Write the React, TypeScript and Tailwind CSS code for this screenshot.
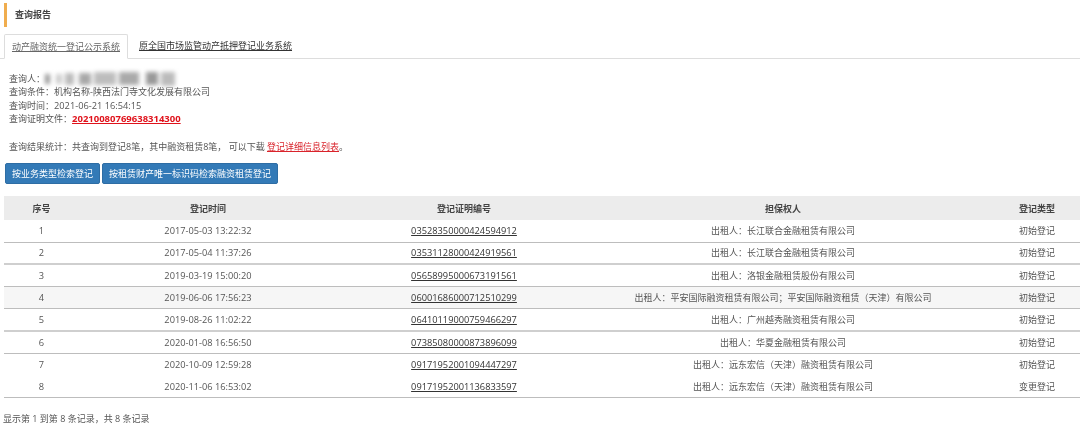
const rows = [
  { time: "2017-05-03 13:22:32", no: "03528350000424594912", owner: "出租人：长江联合金融租赁有限公司", type: "初始登记", line: "border-b border-[#bdbdbd]" },
  { time: "2017-05-04 11:37:26", no: "03531128000424919561", owner: "出租人：长江联合金融租赁有限公司", type: "初始登记", line: "border-b-2 border-[#cfcfcf]" },
  { time: "2019-03-19 15:00:20", no: "05658995000673191561", owner: "出租人：洛银金融租赁股份有限公司", type: "初始登记", line: "border-b border-[#bdbdbd]" },
  { time: "2019-06-06 17:56:23", no: "06001686000712510299", owner: "出租人：平安国际融资租赁有限公司；平安国际融资租赁（天津）有限公司", type: "初始登记", line: "border-b border-[#bdbdbd] bg-[#f6f6f6]" },
  { time: "2019-08-26 11:02:22", no: "06410119000759466297", owner: "出租人：广州越秀融资租赁有限公司", type: "初始登记", line: "border-b-2 border-[#cfcfcf]" },
  { time: "2020-01-08 16:56:50", no: "07385080000873896099", owner: "出租人：华夏金融租赁有限公司", type: "初始登记", line: "border-b border-[#bdbdbd]" },
  { time: "2020-10-09 12:59:28", no: "09171952001094447297", owner: "出租人：远东宏信（天津）融资租赁有限公司", type: "初始登记", line: "" },
  { time: "2020-11-06 16:53:02", no: "09171952001136833597", owner: "出租人：远东宏信（天津）融资租赁有限公司", type: "变更登记", line: "border-b border-[#bdbdbd]" },
];

const grid = "grid grid-cols-[75px_258px_254px_384px_105px] items-center text-center";

export default function App() {
  return (
    <div className="h-[433px] w-[1080px] overflow-hidden bg-white font-['Open_Sans','Noto_Sans_CJK_SC',sans-serif] text-[9px] leading-[13.3px] text-[#555] [filter:blur(0.4px)]">
      <div className="flex pl-[4px] pt-[3px]">
        <div className="flex h-[24px] items-center border-l-[3px] border-[#f0ad4e] pl-[8px] font-semibold text-[#444]">查询报告</div>
      </div>

      <div className="mt-[7px] flex h-[25px] border-b border-[#ddd] pl-[4px]">
        <div className="flex h-[25px] w-[124px] items-center justify-center rounded-t-[2px] border border-[#ddd] border-b-white bg-white text-[#666] underline">动产融资统一登记公示系统</div>
        <div className="flex h-[24px] items-center pl-[11px] text-[#333] underline">原全国市场监管动产抵押登记业务系统</div>
      </div>

      <div className="pl-[9px] pt-[13px]">
        <div className="flex h-[13.3px] items-center">
          查询人：
          <div className="flex items-center gap-[3px] blur-[2px]">
            <div className="h-[10px] w-[5px] bg-[#999]" />
            <div className="ml-[3px] h-[10px] w-[6px] bg-[#ccc]" />
            <div className="h-[12px] w-[9px] bg-[#bbb]" />
            <div className="ml-[2px] h-[12px] w-[12px] bg-[#a8a8a8]" />
            <div className="h-[13px] w-[22px] bg-[#bdbdbd]" />
            <div className="h-[13px] w-[20px] bg-[#aaa]" />
            <div className="ml-[4px] h-[13px] w-[12px] bg-[#999]" />
            <div className="h-[14px] w-[14px] bg-[#bbb]" />
          </div>
        </div>
        <div>查询条件：机构名称-陕西法门寺文化发展有限公司</div>
        <div>查询时间：<span className="text-[9.25px]">2021-06-21 16:54:15</span></div>
        <div>
          查询证明文件：<span className="text-[9.5px] font-bold text-[#e0121b] underline">20210080769638314300</span>
        </div>
        <div className="mt-[15px]">
          查询结果统计：共查询到登记8笔，其中融资租赁8笔， 可以下载 <span className="text-[#d9232b] underline">登记详细信息列表</span>。
        </div>
      </div>

      <div className="flex gap-[2px] pl-[5px] pt-[10px]">
        <div className="flex h-[21px] w-[95px] items-center justify-center rounded-[2px] border border-[#2e6da4] bg-[#337ab7] text-white">按业务类型检索登记</div>
        <div className="flex h-[21px] w-[176px] items-center justify-center rounded-[2px] border border-[#2e6da4] bg-[#337ab7] text-white">按租赁财产唯一标识码检索融资租赁登记</div>
      </div>

      <div className="ml-[4px] mt-[12px] w-[1076px]">
        <div className={`${grid} h-[24px] bg-[#ececec] font-semibold text-[#444]`}>
          <div>序号</div>
          <div>登记时间</div>
          <div>登记证明编号</div>
          <div>担保权人</div>
          <div className="pl-[19px]">登记类型</div>
        </div>
        {rows.map((r, i) => (
          <div key={r.no} className={`${grid} h-[22.25px] ${r.line}`}>
            <div className="text-[9.25px]">{i + 1}</div>
            <div className="text-[9.25px]">{r.time}</div>
            <div className="text-[9.25px] text-[#333] underline">{r.no}</div>
            <div>{r.owner}</div>
            <div className="pl-[19px]">{r.type}</div>
          </div>
        ))}
      </div>

      <div className="pl-[3px] pt-[14px]">显示第 1 到第 8 条记录，共 8 条记录</div>
    </div>
  );
}
